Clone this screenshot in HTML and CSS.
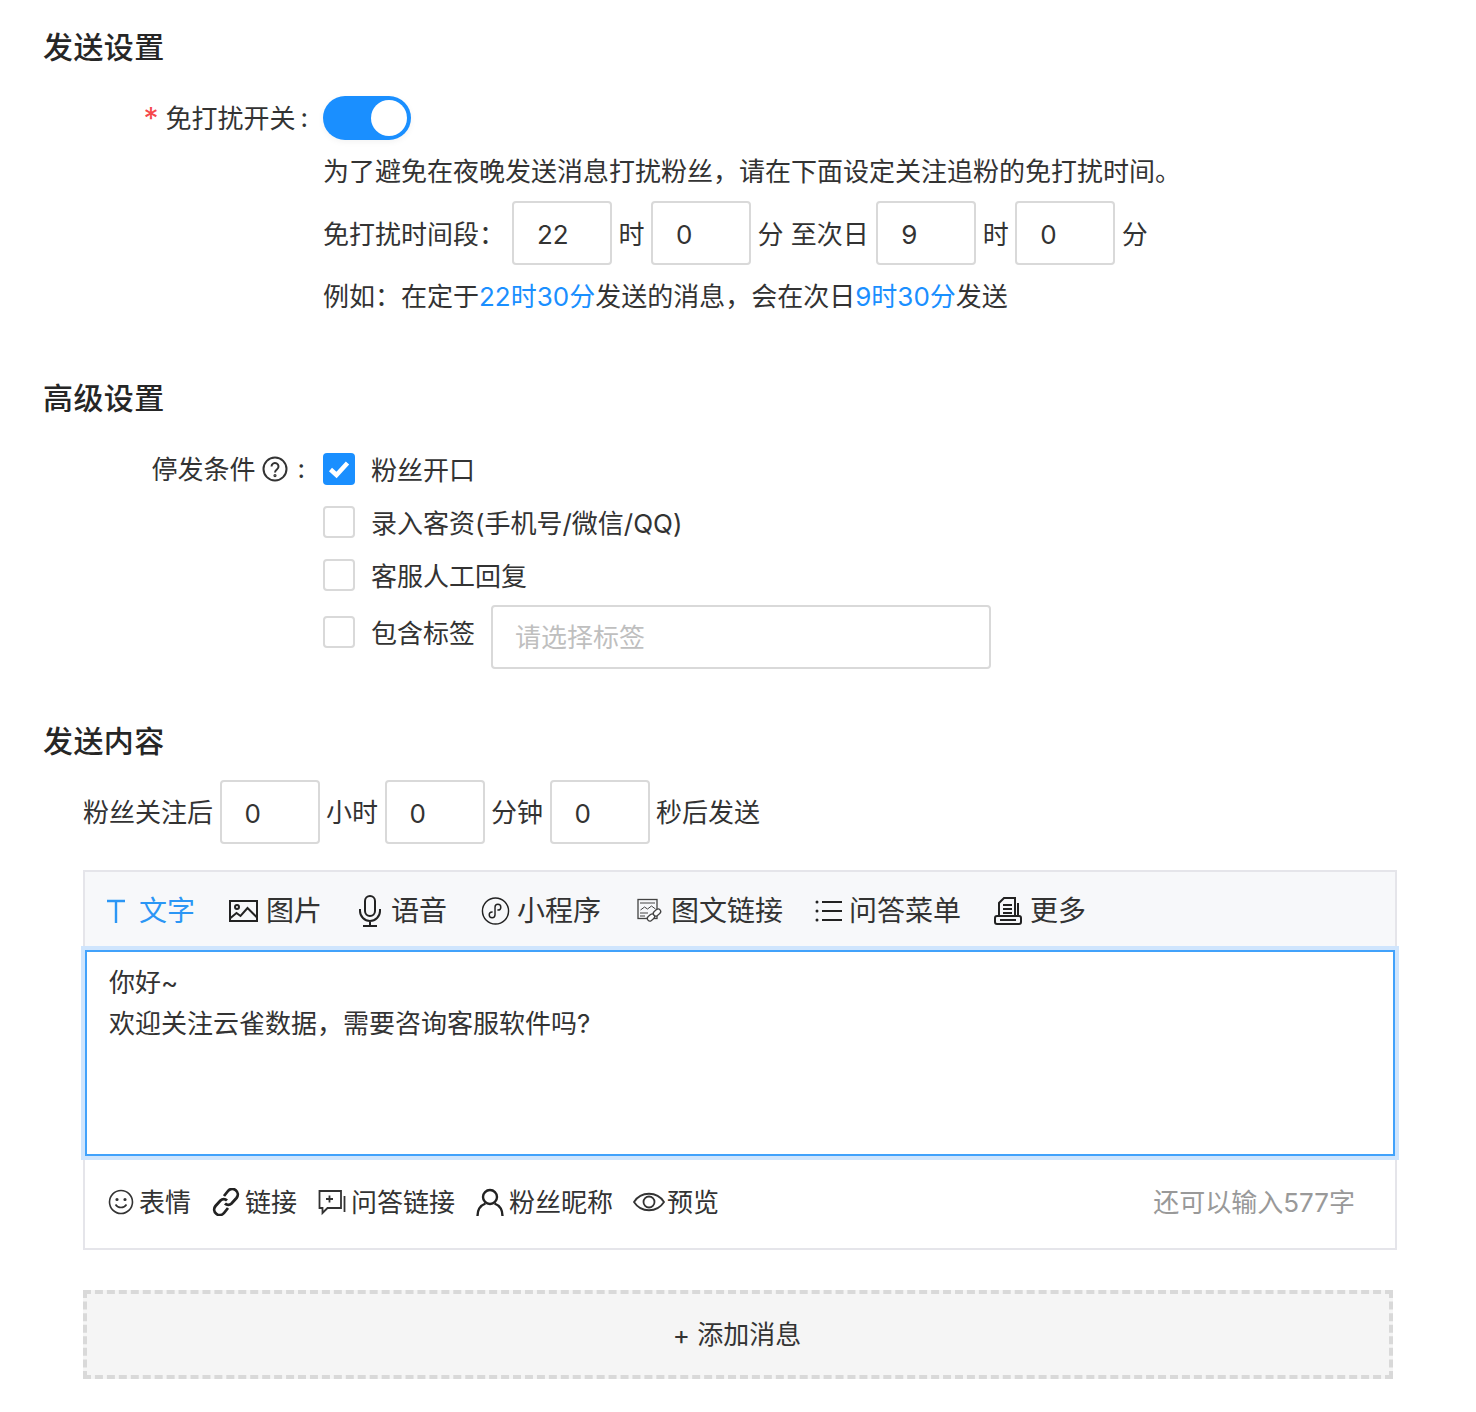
FILE: index.html
```html
<!DOCTYPE html>
<html lang="zh-CN">
<head>
  <meta charset="UTF-8">
  <title>发送设置</title>
  <link rel="stylesheet" href="styles.css">
</head>

<body>
  <!-- 发送设置 -->
  <section class="block block-send">
    <h2>发送设置</h2>
    <div class="form-row">
      <div class="form-label"><span class="star">*</span><span class="label-text">免打扰开关</span><span class="colon">:</span></div>
      <div class="form-body">
        <div class="switch"><span class="knob"></span></div>
        <p class="tip">为了避免在夜晚发送消息打扰粉丝，请在下面设定关注追粉的免打扰时间。</p>
        <div class="time-line">
          <span class="time-title">免打扰时间段：</span>
          <span class="num-input">22</span><span class="unit">时</span>
          <span class="num-input">0</span><span class="unit unit-long">分 至次日</span>
          <span class="num-input">9</span><span class="unit">时</span>
          <span class="num-input">0</span><span class="unit">分</span>
        </div>
        <p class="example">例如：在定于<span class="hl">22时30分</span>发送的消息，会在次日<span class="hl">9时30分</span>发送</p>
      </div>
    </div>
  </section>

  <!-- 高级设置 -->
  <section class="block block-adv">
    <h2>高级设置</h2>
    <div class="form-row">
      <div class="form-label label-stop"><span class="label-text">停发条件</span><svg class="help" viewBox="0 0 26 26" width="26" height="26" fill="none" stroke="#333" stroke-width="2"><circle cx="13" cy="13" r="11.500"/><path d="M9.500 10.500a3.500 3.500 0 1 1 5.600 2.800c-1.300 1-2.100 1.600-2.100 3.200"/><circle cx="13" cy="19.600" r=".6"/></svg><span class="colon">:</span></div>
      <div class="form-body">
        <label class="check-row"><span class="check on"><svg viewBox="0 0 32 32" width="32" height="32" fill="none" stroke="#fff" stroke-width="4.500"><path d="M7.500 16.500l6 5.500L24.500 10"/></svg></span><span class="check-text">粉丝开口</span></label>
        <label class="check-row"><span class="check"></span><span class="check-text">录入客资(手机号/微信/QQ)</span></label>
        <label class="check-row"><span class="check"></span><span class="check-text">客服人工回复</span></label>
        <label class="check-row check-tag"><span class="check"></span><span class="tag-name">包含标签</span><span class="tag-select">请选择标签</span></label>
      </div>
    </div>
  </section>

  <!-- 发送内容 -->
  <section class="block block-content">
    <h2>发送内容</h2>
    <div class="delay-line">
      <span class="delay-text">粉丝关注后</span><span class="num-input">0</span><span class="delay-text">小时</span><span class="num-input">0</span><span class="delay-text">分钟</span><span class="num-input">0</span><span class="delay-text">秒后发送</span>
    </div>

    <div class="editor">
      <div class="tabs">
        <div class="tab active">
          <svg width="18" height="26" viewBox="0 0 18 26" fill="none" stroke="#2b96f5" stroke-width="2.400"><path d="M0 3h18M9 3v22"/></svg>
          <span>文字</span>
        </div>
        <div class="tab">
          <svg width="30" height="24" viewBox="0 0 30 24" fill="none" stroke="#222" stroke-width="2"><rect x="1" y="2" width="27" height="20"/><circle cx="8" cy="8" r="2"/><path d="M1.500 19l6-5 4 3 7-8 9 9"/></svg>
          <span>图片</span>
        </div>
        <div class="tab tab-mic">
          <svg width="22" height="32" viewBox="0 0 22 32" fill="none" stroke="#222" stroke-width="2"><rect x="6" y="1" width="10" height="20" rx="5"/><path d="M1 14v2a10 10 0 0 0 20 0v-2M11 26v5M4 31h14"/></svg>
          <span>语音</span>
        </div>
        <div class="tab">
          <svg width="29" height="30" viewBox="0 0 30 30" fill="none" stroke="#222" stroke-width="1.500"><circle cx="15" cy="15" r="13.500"/><path d="M11 16a3 3 0 1 0 3 3v-8a3 3 0 1 1 3 3" transform="translate(0.500 0)" stroke-linecap="round"/></svg>
          <span>小程序</span>
        </div>
        <div class="tab tab-news">
          <svg width="26" height="26" viewBox="0 0 26 26" fill="none" stroke="#444" stroke-width="1.300"><rect x="1" y="1.500" width="19" height="19"/><path d="M3 5h15M3 15h8M3 18h5" stroke-width="1"/><path d="M3.500 12l4-3 3 2 4-3 4 3" stroke-width="1"/><rect x="10" y="17" width="8" height="5" rx="2.500" transform="rotate(-40 14 19.500)" fill="#fff"/><rect x="16" y="12" width="8" height="5" rx="2.500" transform="rotate(-40 20 14.500)" fill="#fff"/></svg>
          <span>图文链接</span>
        </div>
        <div class="tab tab-list">
          <svg width="27" height="24" viewBox="0 0 27 24" fill="#222"><circle cx="2" cy="3" r="1.500"/><circle cx="2" cy="12" r="1.500"/><circle cx="2" cy="21" r="1.500"/><rect x="7" y="2" width="20" height="2"/><rect x="7" y="11" width="20" height="2"/><rect x="7" y="20" width="20" height="2"/></svg>
          <span>问答菜单</span>
        </div>
        <div class="tab tab-more">
          <svg width="28" height="28" viewBox="0 0 28 28" fill="none" stroke="#222" stroke-width="2"><path d="M5 18V6l5-5h11v17"/><path d="M24 6v12"/><path d="M9 8h9M9 12h9M9 16h9"/><rect x="1" y="19" width="26" height="8" rx="2"/><path d="M6 23h16"/></svg>
          <span>更多</span>
        </div>
      </div>

      <div class="msg-box">你好~<br>欢迎关注云雀数据，需要咨询客服软件吗?</div>

      <div class="tools">
        <div class="tool">
          <svg width="26" height="26" viewBox="0 0 26 26" fill="none" stroke="#333" stroke-width="1.600"><circle cx="13" cy="13" r="11.500"/><circle cx="9" cy="10.500" r=".8"/><circle cx="17" cy="10.500" r=".8"/><path d="M7.500 15.500c2.500 4 8.500 4 11 0"/></svg>
          <span>表情</span>
        </div>
        <div class="tool">
          <svg width="28" height="28" viewBox="0 0 28 28" fill="none" stroke="#222" stroke-width="2.800"><path d="M12 8l4-5a5.500 5.500 0 0 1 8.500 7l-5 5.500a4.500 4.500 0 0 1-6.500 0"/><path d="M16 20l-4 5a5.500 5.500 0 0 1-8.500-7l5-5.500a4.500 4.500 0 0 1 6.500 0"/></svg>
          <span>链接</span>
        </div>
        <div class="tool">
          <svg width="28" height="28" viewBox="0 0 28 28" fill="none" stroke="#333" stroke-width="1.800"><path d="M23 20V3H1.500v17h3v5l5-5z"/><path d="M26.500 8v16"/><path d="M8 11h7M11.500 7.500v7"/></svg>
          <span>问答链接</span>
        </div>
        <div class="tool tool-user">
          <svg width="28" height="28" viewBox="0 0 28 28" fill="none" stroke="#222" stroke-width="2.400"><circle cx="14" cy="9" r="7"/><path d="M1.500 28c0-7 4-11 8-12.500M26.500 28c0-7-4-11-8-12.500"/></svg>
          <span>粉丝昵称</span>
        </div>
        <div class="tool tool-eye">
          <svg width="32" height="24" viewBox="0 0 32 24" fill="none" stroke="#333" stroke-width="1.800"><path d="M1 12C8 1 24 1 31 12 24 23 8 23 1 12z"/><circle cx="16" cy="12" r="5.500"/></svg>
          <span>预览</span>
        </div>
        <div class="remain">还可以输入577字</div>
      </div>
    </div>

    <div class="add-msg">+ 添加消息</div>
  </section>
</body>

</html>
```

FILE: styles.css
```css
* {
    box-sizing: border-box;
}
body {
    margin: 0;
    font-family: Inter, "Noto Sans CJK SC", sans-serif;
    font-size: 26px;
    line-height: 40px;
    color: #333;
    background-color: #fff;
}
h2 {
    margin: 0 0 0 -1px;
    font-size: 30px;
    line-height: 40px;
    font-weight: 500;
    color: #262626;
    letter-spacing: 0.4px;
}
p {
    margin: 0;
}
.block {
    padding-left: 44px;
}
.block-send {
    padding-top: 27px;
}
.block-adv {
    padding-top: 61px;
}
.block-content {
    padding-top: 52px;
}

/* form rows */
.form-row {
    display: flex;
    margin-top: 29px;
}
.form-label {
    width: 279px;
    display: flex;
    justify-content: flex-end;
    align-items: center;
    height: 44px;
    padding-right: 15px;
}
.label-text {
    padding-top: 2px;
}
.star {
    margin-right: 7px;
    color: #f5484b;
    font-size: 30px;
}
.colon {
    margin-left: 5px;
}
.switch {
    width: 88px;
    height: 44px;
    border-radius: 22px;
    background-color: #1a8fff;
    position: relative;
    box-shadow: 0 2px 6px rgba(0,0,0,0.05);
}
.knob {
    position: absolute;
    right: 4px;
    top: 4px;
    width: 36px;
    height: 36px;
    border-radius: 50%;
    background-color: #fff;
}
.tip {
    margin-top: 12px;
}
.time-line {
    display: flex;
    align-items: center;
    margin-top: 9px;
}
.time-title {
    width: 189px;
    padding-top: 3px;
}
.num-input {
    display: block;
    width: 100px;
    height: 64px;
    line-height: 60px;
    padding: 2px 0 0 23px;
    border: 2px solid #d9d9d9;
    border-radius: 4px;
}
.unit {
    padding: 3px 6.500px 0;
    white-space: nowrap;
}
.unit-long {
    padding-right: 7.500px;
}
.example {
    margin-top: 12px;
}
.hl {
    color: #1a8fff;
}

/* checks */
.block-adv .form-row {
    margin-top: 35px;
}
.label-stop {
    height: 32px;
    padding-right: 18px;
}
.label-stop .help {
    margin-left: 6px;
}
.label-stop .colon {
    margin-left: 10px;
}
.check-row {
    display: flex;
    align-items: center;
    height: 32px;
    margin-bottom: 21px;
}
.check-text {
    padding-top: 3px;
}
.check {
    width: 32px;
    height: 32px;
    margin-right: 16px;
    border: 2px solid #d9d9d9;
    border-radius: 4px;
}
.check.on {
    background-color: #1a8fff;
    border: 0;
}
.check.on svg {
    display: block;
}
.check-tag {
    align-items: flex-start;
    height: 64px;
    margin: -7px 0 0;
}
.check-tag .check {
    margin-top: 11px;
}
.tag-name {
    line-height: 58px;
}
.tag-select {
    width: 500px;
    height: 64px;
    line-height: 62px;
    margin-left: 16px;
    padding-left: 22px;
    border: 2px solid #d9d9d9;
    border-radius: 4px;
    color: #bfbfbf;
}

/* delay */
.delay-line {
    display: flex;
    align-items: center;
    gap: 6.500px;
    margin-top: 19px;
    padding-left: 39px;
}
.delay-text {
    padding-top: 2px;
}

/* editor */
.editor {
    width: 1314px;
    margin: 26px 0 0 39px;
    border: 2px solid #e5e5ea;
}
.tabs {
    display: flex;
    align-items: center;
    height: 78px;
    padding-left: 22px;
    background-color: #f7f8fa;
    font-size: 28px;
}
.tab {
    display: flex;
    align-items: center;
    gap: 7px;
    margin-right: 34px;
}
.tab.active {
    color: #2b96f5;
    gap: 14px;
}
.tab-mic {
    gap: 10px;
    margin-left: 3px;
}
.tab-news {
    gap: 8px;
    margin-left: 2px;
    margin-right: 32px;
}
.tab-list {
    margin-right: 33px;
}
.tab-more {
    gap: 8px;
}
.msg-box {
    height: 206px;
    padding: 10px 22px;
    line-height: 41px;
    border: 2px solid #41a2fb;
    box-shadow: 0 0 0 4px #cfe5fd;
    position: relative;
    background-color: #fff;
}
.tools {
    display: flex;
    align-items: center;
    height: 92px;
    padding-left: 23px;
}
.tool {
    display: flex;
    align-items: center;
    gap: 5px;
    margin-right: 21px;
}
.tool span {
    padding-top: 2px;
}
.tool-user {
    margin-right: 20px;
}
.tool-eye {
    gap: 2px;
}
.remain {
    margin-left: auto;
    margin-right: 40px;
    padding-top: 2px;
    color: #999;
}

/* add */
.add-msg {
    width: 1310px;
    height: 89px;
    line-height: 81px;
    margin: 40px 0 0 39px;
    padding-right: 2px;
    text-align: center;
    background-color: #f5f5f5;
    border: 4px dashed #d9d9d9;
}
```
